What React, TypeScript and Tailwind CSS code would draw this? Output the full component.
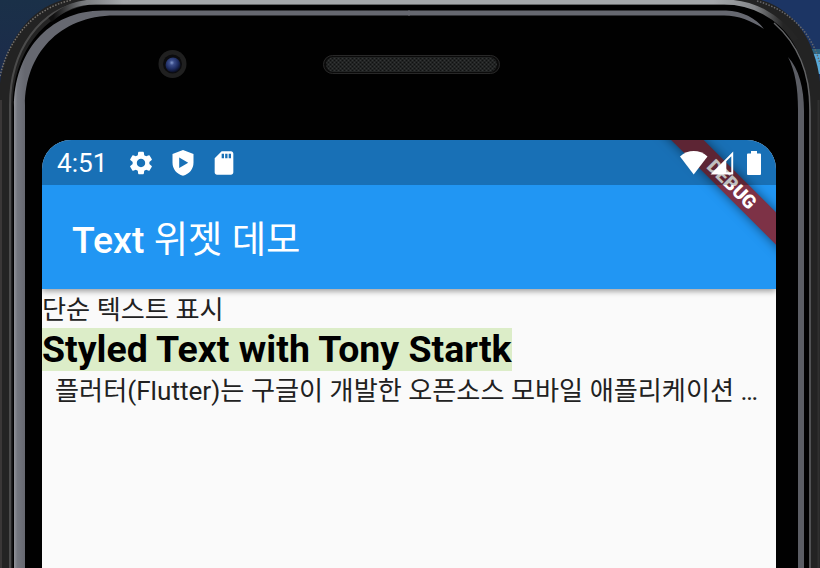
import React from "react";
import { MdSettings, MdSdCard } from "react-icons/md";

function PhoneFrame() {
  return (
    <svg className="absolute inset-0" width="820" height="568" viewBox="0 0 820 568" aria-hidden="true">
      <defs>
        <linearGradient id="sky" x1="0" y1="0" x2="0" y2="75" gradientUnits="userSpaceOnUse">
          <stop offset="0" stopColor="#1a3048" />
          <stop offset="1" stopColor="#1c2b4b" />
        </linearGradient>
        <linearGradient id="topRim" x1="0" x2="820" y1="0" y2="0" gradientUnits="userSpaceOnUse">
          <stop offset="0.065" stopColor="#101010" />
          <stop offset="0.1" stopColor="#77797c" />
          <stop offset="0.15" stopColor="#a5a8ab" />
          <stop offset="0.87" stopColor="#a5a8ab" />
          <stop offset="0.92" stopColor="#85878a" />
          <stop offset="0.955" stopColor="#252525" />
        </linearGradient>
        <linearGradient id="leftEdge" x1="14" x2="25" y1="0" y2="0" gradientUnits="userSpaceOnUse">
          <stop offset="0" stopColor="#92949a" />
          <stop offset="0.3" stopColor="#74777f" />
          <stop offset="1" stopColor="#666870" />
        </linearGradient>
        <pattern id="mesh" width="4" height="4" patternUnits="userSpaceOnUse">
          <rect width="4" height="4" fill="#222424" />
          <path d="M0 0h1v1H0zM2 2h1v1H2z" fill="#343636" />
          <path d="M2 0h1v1H2zM0 2h1v1H0z" fill="#101111" />
        </pattern>
        <radialGradient id="lens" cx="0.42" cy="0.35" r="0.65">
          <stop offset="0" stopColor="#8398cc" />
          <stop offset="0.25" stopColor="#3b4d8a" />
          <stop offset="0.65" stopColor="#1d2b60" />
          <stop offset="1" stopColor="#090d20" />
        </radialGradient>
      </defs>
      <rect width="410" height="120" fill="url(#sky)" />
      <rect x="410" width="410" height="120" fill="#1c3564" />
      <rect x="790" y="49" width="30" height="6" fill="#2c637f" />
      <rect x="790" y="54" width="30" height="20" fill="#58a9d8" />
      <path d="M-1 568V100C-1 44 32 1 78-3H744C790 0 821 40 821 100V568Z" fill="#232323" />
      <path d="M0 76C9 38 34 8 72 0" fill="none" stroke="#77736e" strokeWidth="1.5" strokeDasharray="1.5 1.5" />
      <path d="M757 1C789 10 812 32 820 64" fill="none" stroke="#68686b" strokeWidth="1.5" strokeDasharray="1.5 1.5" />
      <path d="M1 568V100" fill="none" stroke="#3a3737" strokeWidth="2" />
      <path d="M10 568V105C10 50 40 8 85 2" fill="none" stroke="#4b4b4b" strokeWidth="2" />
      <path d="M12.5 568V105C13 54 43 13 88 5H732C774 6 809 45 809 105V568Z" fill="#010101" />
      <path d="M50 20C65 7 77 2 96 2H724C753 2 778 16 796 40" fill="none" stroke="url(#topRim)" strokeWidth="5" />
      <path d="M810 568V110C810 71 797 43 774 23" fill="none" stroke="#626365" strokeWidth="1.5" />
      <path d="M818.5 568V100" stroke="#303030" strokeWidth="2" />
      <path d="M14 568V107C14 54 47 10 104 10.5H410V15.5H116C59 15 25 55 25 105V568Z" fill="url(#leftEdge)" />
      <path d="M408 10.5H726C742 11 756 18 764 29C750 20 739 16 724 15.5H408Z" fill="#666870" />
      <path d="M788 57C799 69 804 88 804 111V568H798V110C798 87 795 71 788 57Z" fill="#5b5d64" />
      <rect x="323" y="55" width="177" height="19" rx="9.5" fill="#0b0b0b" />
      <rect x="323.5" y="55.5" width="176" height="18" rx="9" fill="none" stroke="#282828" />
      <rect x="326" y="57" width="171" height="15" rx="7.5" fill="url(#mesh)" />
      <circle cx="172.5" cy="64" r="14" fill="#202020" />
      <circle cx="172.5" cy="64" r="9.5" fill="#0c0c0e" />
      <circle cx="173" cy="65" r="7.5" fill="url(#lens)" />
    </svg>
  );
}

function DebugBanner() {
  return (
    <div className="absolute left-[589.5px] top-[33.2px] h-[22.6px] w-[200px] rotate-45 bg-[#7d3246] text-center font-['Roboto'] text-[19px] leading-[23px] font-black text-white shadow-[0_0_11px_rgba(0,0,0,0.5)]">
      DEBUG
    </div>
  );
}

function StatusBar() {
  return (
    <div className="relative z-10 flex h-[45px] items-center bg-black/25 pl-[15px] text-white">
      <span className="w-[70px] pt-[2px] font-['Roboto'] text-[26.2px] leading-none">4:51</span>
      <MdSettings size={28} />
      <svg className="ml-[17px]" width="22" height="26" viewBox="0 0 22 26">
        <path fillRule="evenodd" fill="currentColor" d="M11 0L21.5 4V12.5C21.5 19.2 17.5 23.8 11 25.8C4.500 23.800.500 19.200.500 12.500V4ZM7.200 7.500V18L16.200 12.800Z" />
      </svg>
      <MdSdCard className="ml-[16px]" size={28} />
      <svg className="ml-auto" width="28" height="24" viewBox="0 0 28 24">
        <path fill="currentColor" d="M0 5.500C8-1.700 19.500-1.700 27.500 5.500L13.700 23.500Z" />
      </svg>
      <svg className="ml-[2px]" width="24" height="24" viewBox="0 0 24 24">
        <path fillRule="evenodd" fill="currentColor" d="M23.200.500V23.500H.500ZM16.300 10.300V21.300H21.300V5.300Z" />
      </svg>
      <svg className="mr-[15px] ml-[13px]" width="14" height="24" viewBox="0 0 14 24">
        <path fill="currentColor" d="M4 0H10V2.500H13Q14 2.500 14 3.500V23Q14 24 13 24H1Q0 24 0 23V3.500Q0 2.500 1 2.500H4Z" />
      </svg>
    </div>
  );
}

export default function App() {
  return (
    <div className="relative h-[568px] w-[820px] overflow-hidden bg-black">
      <PhoneFrame />
      <main className="relative mt-[140px] ml-[42px] h-[428px] w-[734px] overflow-hidden rounded-t-[29px] bg-[#fafafa] font-['Roboto','Noto_Sans_CJK_KR',sans-serif]">
        <header className="relative z-10 h-[149px] bg-[#2196f3] shadow-[0_2px_6px_rgba(0,0,0,0.4)]">
          <DebugBanner />
          <StatusBar />
          <h1 className="flex h-[104px] items-center pt-[7px] pl-[30px] text-[37.4px] leading-none font-medium whitespace-pre text-white">
            <span>Text </span>
            <span className="font-normal">위젯 데모</span>
          </h1>
        </header>
        <section className="flex flex-col items-start whitespace-nowrap text-[#212121]">
          <p className="h-[39px] pt-[2px] text-[26.2px] leading-[39px]">단순 텍스트 표시</p>
          <p className="h-[43px] bg-[#dcedc8] text-[37.45px] leading-[43px] font-bold text-black">Styled Text with Tony Startk</p>
          <p className="h-[39px] pt-px pl-[13px] text-[26.17px] leading-[39px]">플러터(Flutter)는 구글이 개발한 오픈소스 모바일 애플리케이션 …</p>
        </section>
      </main>
    </div>
  );
}
